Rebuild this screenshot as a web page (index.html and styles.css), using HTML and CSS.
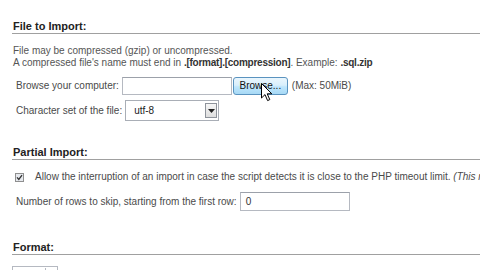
FILE: index.html
```html
<!DOCTYPE html>
<html>
<head>
<meta charset="utf-8">
<link rel="stylesheet" href="styles.css">
</head>
<body>
<div class="page">
  <section class="group">
    <h2 class="title">File to Import:</h2>
    <p class="note">File may be compressed (gzip) or uncompressed.<br>A compressed file's name must end in <b>.[format].[compression]</b>. Example: <b>.sql.zip</b></p>
    <div class="row row-browse">
      <span class="label">Browse your computer:</span>
      <span class="file">
        <span class="file-input"></span>
        <span class="btn">Browse...
          <svg class="cursor" width="12" height="19" viewBox="0 0 12 19"><path d="M0.5 0.5 L0.5 15 L4 11.6 L6.6 17.6 L8.8 16.6 L6.2 10.8 L10.8 10.8 Z" fill="#fff" stroke="#000" stroke-width="1" stroke-linejoin="round"/></svg>
        </span>
      </span>
      <span class="max">(Max: 50MiB)</span>
    </div>
    <div class="row row-charset">
      <span class="label">Character set of the file:</span>
      <span class="select">utf-8<span class="arrow"><svg width="7" height="4" viewBox="0 0 7 4"><path d="M0 0 H7 L3.5 4 Z" fill="#222"/></svg></span></span>
    </div>
  </section>
  <section class="group">
    <h2 class="title title-partial">Partial Import:</h2>
    <div class="row row-check">
      <span class="check"><svg width="9" height="9" viewBox="0 0 9 9"><rect x="0.5" y="0.5" width="8" height="8" fill="#e6e9ee" stroke="#8f8f8f"/><path d="M2 4.4 L3.8 6.5 L7 2.2" fill="none" stroke="#333" stroke-width="1.3"/></svg></span>
      <span class="check-text">Allow the interruption of an import in case the script detects it is close to the PHP timeout limit. <i>(This might be good way to import large files, however it can break transactions.)</i></span>
    </div>
    <div class="row row-skip">
      <span class="label">Number of rows to skip, starting from the first row:</span>
      <span class="text-input">0</span>
    </div>
  </section>
  <section class="group">
    <h2 class="title title-format">Format:</h2>
    <div class="format-select"><span class="format-arrow"></span></div>
  </section>
</div>
</body>
</html>
```
FILE: styles.css
```css
html, body {
  margin: 0;
  padding: 0;
  background: #fff;
}
body {
  width: 480px;
  height: 270px;
  overflow: hidden;
  font-family: "Liberation Sans", Arial, sans-serif;
  font-size: 10px;
  color: #4a4a4a;
}
.page {
  padding: 20px 0 0 12px;
}
.title {
  margin: 0;
  padding-left: 1px;
  font-size: 11px;
  line-height: 13px;
  font-weight: bold;
  color: #222;
  border-bottom: 1px solid #a0a0a0;
}
.title-partial {
  margin-top: 25px;
}
.title-format {
  margin-top: 30px;
}
.note {
  margin: 11px 0 0 0;
  padding-left: 1px;
  line-height: 12px;
  color: #555;
  white-space: nowrap;
}
.note b {
  color: #333;
  letter-spacing: -0.25px;
}
.row {
  display: flex;
  align-items: center;
  gap: 3px;
  padding-left: 4px;
  white-space: nowrap;
  line-height: 12px;
}
.row-browse {
  margin-top: 8px;
  height: 18px;
}
.row-charset {
  margin-top: 5px;
  height: 21px;
}
.row-check {
  margin-top: 11px;
  padding-left: 3px;
  gap: 11px;
}
.row-skip {
  margin-top: 9px;
  height: 19px;
}
.label {
  color: #4a4a4a;
}
.file {
  display: flex;
  align-items: center;
}
.file-input {
  width: 108px;
  height: 16px;
  border: 1px solid #b5b9c1;
  border-top-color: #9ca1aa;
  background: #fff;
}
.btn {
  position: relative;
  box-sizing: border-box;
  width: 55px;
  height: 18px;
  margin-left: 1px;
  border: 1px solid #5a93bf;
  border-radius: 3px;
  background: linear-gradient(#eaf6fd 0%, #d9effc 45%, #bee6fd 55%, #a7d9f5 100%);
  color: #111;
  font-size: 10px;
  line-height: 16px;
  text-align: center;
}
.cursor {
  position: absolute;
  left: 27px;
  top: 5px;
}
.max {
  margin-left: 1px;
  color: #4a4a4a;
}
.select {
  position: relative;
  box-sizing: border-box;
  width: 94px;
  height: 21px;
  border: 1px solid #a9aeb6;
  background: #fff;
  padding: 0 0 0 8px;
  line-height: 19px;
  color: #222;
}
.arrow {
  position: absolute;
  right: 1px;
  top: 2px;
  box-sizing: border-box;
  width: 12px;
  height: 15px;
  border: 1px solid #8e939b;
  background: linear-gradient(#f6f6f6, #dedede);
  display: flex;
  align-items: center;
  justify-content: center;
}
.check {
  display: flex;
}
.check-text {
  color: #4a4a4a;
}
.text-input {
  box-sizing: border-box;
  width: 110px;
  height: 19px;
  border: 1px solid #b5b9c1;
  border-top-color: #9ca1aa;
  padding-left: 5px;
  line-height: 17px;
  color: #333;
}
.format-select {
  position: relative;
  box-sizing: border-box;
  width: 46px;
  height: 18px;
  margin-top: 11px;
  border: 1px solid #b5b9c1;
}
.format-arrow {
  position: absolute;
  right: 1px;
  top: 1px;
  width: 10px;
  height: 14px;
  border-left: 1px solid #b5b9c1;
}
```
